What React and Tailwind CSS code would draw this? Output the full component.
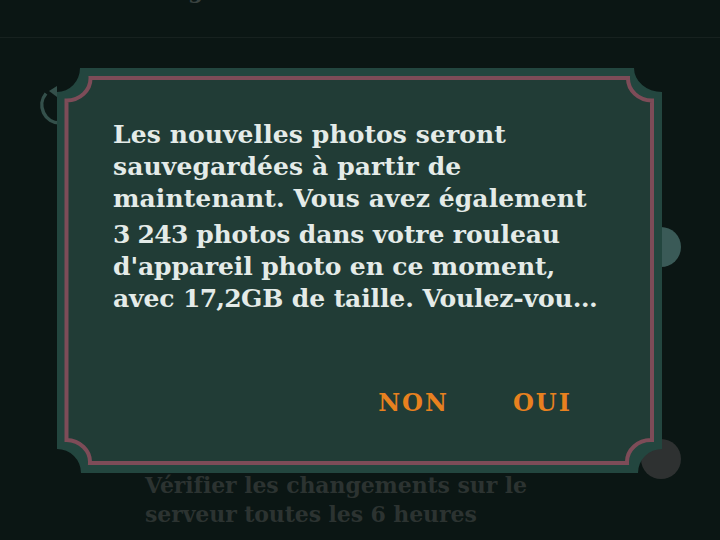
import React from "react";

const serif = "font-['DejaVu_Serif','Liberation_Serif',serif]";

const DialogFrame = () => (
    <svg className="absolute inset-0" width="605" height="405" viewBox="0 0 605 405">
        <path
            d="M23 0H577A28 24 0 0 0 605 24V381A24 24 0 0 0 581 405H24A24 24 0 0 0 0 381V24A23 24 0 0 0 23 0Z"
            fill="#23463f"
        />
        <path
            d="M33.500 10H571A24 22 0 0 0 595 32.500V372A24 22 0 0 0 570 395H33A24 22 0 0 0 9.500 372V32.500A24 22 0 0 0 33.500 10Z"
            fill="#213c36"
            stroke="#7d4c58"
            strokeWidth="4"
        />
    </svg>
);

const RefreshIcon = () => (
    <svg className="ml-[38px] shrink-0" width="24" height="44" viewBox="0 0 24 44" fill="none">
        <path d="M22 39A18 18 0 0 1 8 9.500" stroke="#34504b" strokeWidth="3.500" />
        <path d="M19 2L11 7L19 13Z" fill="#34504b" />
    </svg>
);

const App = () => {
    return (
        <div className={`relative w-[720px] h-[540px] overflow-hidden bg-[#0b1614] ${serif}`}>
            <header className="h-[38px] border-b border-[#17211f] overflow-hidden">
                <p className="-mt-[26px] pl-[115px] text-[22px] leading-[32px] font-bold text-[#3a4240]">Sauvegarde</p>
            </header>

            <div className="flex items-start h-[433px] pt-[46px]">
                <RefreshIcon />
                <div className="flex-1 flex flex-col items-end pr-[39px]">
                    <div className="mt-[143px] w-[40px] h-[40px] rounded-full bg-[#3a5a57]" />
                    <div className="mt-[172px] w-[40px] h-[40px] rounded-full bg-[#2e3131]" />
                </div>
            </div>

            <p className="pl-[145px] text-[22px] leading-[29px] font-bold text-[#2c3331] tracking-[-0.1px]">
                Vérifier les changements sur le
                <br />
                serveur toutes les 6 heures
            </p>

            <div className="absolute left-[57px] top-[68px] w-[605px] h-[405px]">
                <DialogFrame />
                <div className="relative pt-[51px] pl-[56px] text-[25px] leading-[32px] font-bold text-[#e4ebe8]">
                    <p className="tracking-[0.1px]">
                        Les nouvelles photos seront
                        <br />
                        sauvegardées à partir de
                        <br />
                        maintenant. Vous avez également
                    </p>
                    <p className="mt-[4px] tracking-[-0.1px]">
                        <span className="tracking-[-0.75px]">3 243</span> photos dans votre rouleau
                        <br />
                        d'appareil photo en ce moment,
                        <br />
                        avec <span className="tracking-[-0.75px]">17,2</span>GB de taille. Voulez-vou…
                    </p>
                </div>
                <div className="relative mt-[72px] flex justify-end gap-[64px] pr-[90px] text-[24px] leading-[32px] font-bold text-[#e8811f] tracking-[2px]">
                    <button>NON</button>
                    <button>OUI</button>
                </div>
            </div>
        </div>
    );
};

export default App;
